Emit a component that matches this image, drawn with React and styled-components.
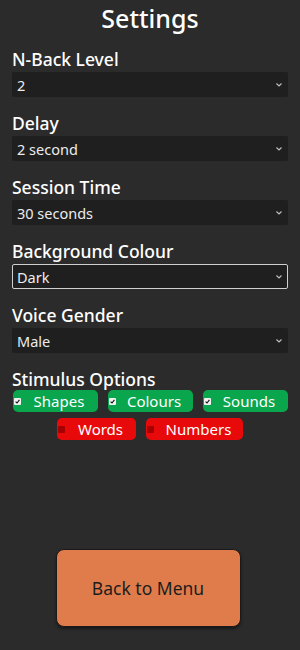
import React from "react";
import styled, { createGlobalStyle } from "styled-components";

const GlobalStyle = createGlobalStyle`
  html, body {
    margin: 0;
    padding: 0;
    background: #2b2b2b;
  }

  body {
    font-family: "Noto Sans", "Open Sans", sans-serif;
    color: #ffffff;
  }
`;

const Page = styled.div`
  display: flex;
  flex-direction: column;
  min-height: 650px;
  box-sizing: border-box;
  padding: 0 12px 23px;
  background: #2b2b2b;
`;

const Title = styled.h1`
  margin: 2px 0 13px;
  font-weight: 500;
  font-size: 25px;
  line-height: 33px;
  text-align: center;
  color: #ffffff;
`;

const Field = styled.div`
  display: flex;
  flex-direction: column;
  margin-bottom: 15px;
`;

const Label = styled.label`
  font-weight: 500;
  font-size: 17.5px;
  line-height: 22px;
  margin-bottom: 2px;
  color: #ffffff;
`;

const SelectBox = styled.div`
  position: relative;
  display: flex;
  align-items: center;
  height: 25px;
  box-sizing: border-box;
  padding: 0 4px;
  background: #1f1f1f;
  border: 1px solid ${(p) => (p.$focused ? "#cfcfcf" : "transparent")};
  border-radius: 2px;

  font-size: 14.5px;
  color: #ececec;
`;

const Chevron = styled.svg`
  position: absolute;
  right: 5px;
  top: 50%;
  width: 6px;
  height: 4px;
  margin-top: -2px;
`;

const Select = ({ value, focused }) => (
  <SelectBox $focused={focused}>
    {value}
    <Chevron viewBox="0 0 6 4">
      <path d="M0.5 0.5 L3 3 L5.5 0.5" fill="none" stroke="#bdbdbd" strokeWidth="1.2" />
    </Chevron>
  </SelectBox>
);

const Options = styled.div`
  display: flex;
  flex-wrap: wrap;
  justify-content: center;
  gap: 6px 10px;
  margin-top: -2px;
`;

const Chip = styled.div`
  display: flex;
  align-items: center;
  height: 22px;
  width: ${(p) => p.$width}px;
  box-sizing: border-box;
  padding: 0 0 0 1px;
  border-radius: 5px;
  background: ${(p) => (p.$on ? "#0aa64d" : "#e80a0a")};
  font-weight: 400;
  font-size: 15px;
  color: #ffffff;
`;

const Box = styled.span`
  display: flex;
  align-items: center;
  justify-content: center;
  width: 7px;
  height: 7px;
  margin-right: 8px;
  background: ${(p) => (p.$on ? "#f2f2f2" : "#a60000")};
  border-radius: 1px;
`;

const ChipText = styled.span`
  flex: 1;
  text-align: center;
  padding-right: 8px;
`;

const Option = ({ label, on, width }) => (
  <Chip $on={on} $width={width}>
    <Box $on={on}>
      {on && (
        <svg width="5" height="5" viewBox="0 0 5 5">
          <path d="M0.6 2.6 L2 4 L4.4 0.8" fill="none" stroke="#111" strokeWidth="1.1" />
        </svg>
      )}
    </Box>
    <ChipText>{label}</ChipText>
  </Chip>
);

const MenuButton = styled.button`
  align-self: center;
  margin: auto 4px 0 0;
  width: 185px;
  height: 78px;
  border: 1px solid #1a1a1a;
  border-radius: 8px;
  background: #e07c4b;
  box-shadow: 0 2px 3px rgba(0, 0, 0, 0.45);
  font-family: "Noto Sans", "Open Sans", sans-serif;
  font-size: 17.5px;
  color: #1c1c1c;
  cursor: pointer;
`;

const fields = [
  { label: "N-Back Level", value: "2" },
  { label: "Delay", value: "2 second" },
  { label: "Session Time", value: "30 seconds" },
  { label: "Background Colour", value: "Dark", focused: true },
  { label: "Voice Gender", value: "Male" },
];

const options = [
  { label: "Shapes", on: true, width: 85 },
  { label: "Colours", on: true, width: 85 },
  { label: "Sounds", on: true, width: 85 },
  { label: "Words", on: false, width: 79 },
  { label: "Numbers", on: false, width: 97 },
];

export default function App() {
  return (
    <>
      <GlobalStyle />
      <Page>
        <Title>Settings</Title>
        {fields.map((f) => (
          <Field key={f.label}>
            <Label>{f.label}</Label>
            <Select value={f.value} focused={f.focused} />
          </Field>
        ))}
        <Field>
          <Label>Stimulus Options</Label>
          <Options>
            {options.map((o) => (
              <Option key={o.label} {...o} />
            ))}
          </Options>
        </Field>
        <MenuButton>Back to Menu</MenuButton>
      </Page>
    </>
  );
}
